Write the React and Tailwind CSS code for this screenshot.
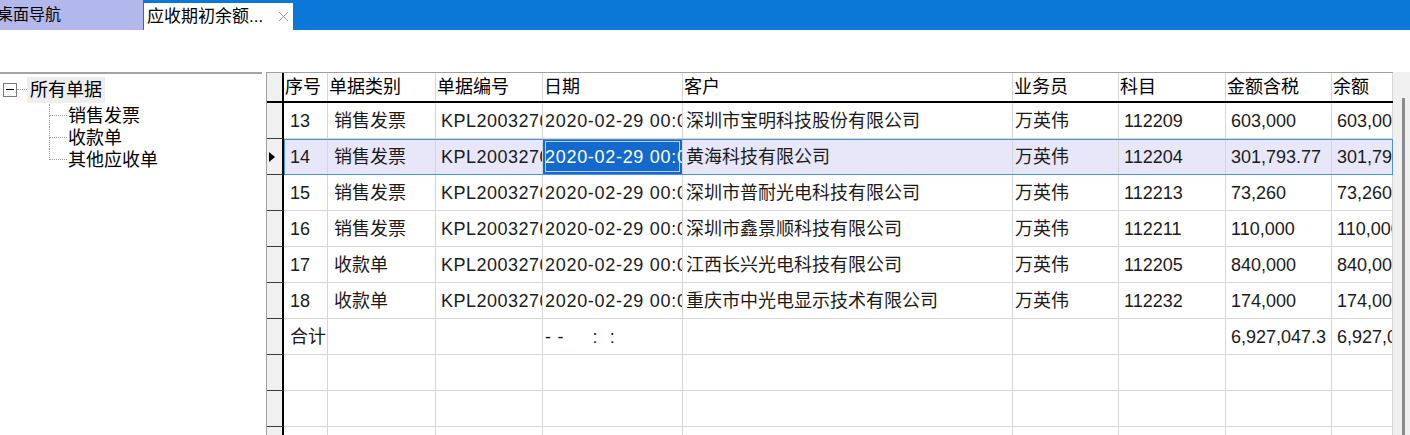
import React from 'react';
import { X } from 'lucide-react';

const columns = [
  { key: 'no', title: '序号', w: 'w-[44px]', pad: 'pl-[6px]' },
  { key: 'type', title: '单据类别', w: 'w-[108px]', pad: 'pl-[6px]' },
  { key: 'code', title: '单据编号', w: 'w-[107px]', pad: 'pl-[5px] tracking-[0.5px]' },
  { key: 'date', title: '日期', w: 'w-[140px]', pad: 'pl-[2px] tracking-[0.7px]' },
  { key: 'customer', title: '客户', w: 'w-[330px]', pad: 'pl-[3px]' },
  { key: 'staff', title: '业务员', w: 'w-[106px]', pad: 'pl-[2px]' },
  { key: 'subject', title: '科目', w: 'w-[107px]', pad: 'pl-[5px]' },
  { key: 'amount', title: '金额含税', w: 'w-[106px]', pad: 'pl-[5px]' },
  { key: 'balance', title: '余额', w: 'w-[61px]', pad: 'pl-[5px]' },
];

const rows = [
  { no: '13', type: '销售发票', code: 'KPL2003270001', date: '2020-02-29 00:00:00', customer: '深圳市宝明科技股份有限公司', staff: '万英伟', subject: '112209', amount: '603,000', balance: '603,000' },
  { no: '14', type: '销售发票', code: 'KPL2003270002', date: '2020-02-29 00:00:00', customer: '黄海科技有限公司', staff: '万英伟', subject: '112204', amount: '301,793.77', balance: '301,793.77', selected: true },
  { no: '15', type: '销售发票', code: 'KPL2003270003', date: '2020-02-29 00:00:00', customer: '深圳市普耐光电科技有限公司', staff: '万英伟', subject: '112213', amount: '73,260', balance: '73,260' },
  { no: '16', type: '销售发票', code: 'KPL2003270004', date: '2020-02-29 00:00:00', customer: '深圳市鑫景顺科技有限公司', staff: '万英伟', subject: '112211', amount: '110,000', balance: '110,000' },
  { no: '17', type: '收款单', code: 'KPL2003270005', date: '2020-02-29 00:00:00', customer: '江西长兴光电科技有限公司', staff: '万英伟', subject: '112205', amount: '840,000', balance: '840,000' },
  { no: '18', type: '收款单', code: 'KPL2003270006', date: '2020-02-29 00:00:00', customer: '重庆市中光电显示技术有限公司', staff: '万英伟', subject: '112232', amount: '174,000', balance: '174,000' },
  { no: '合计', type: '', code: '', date: '- -     :  :', customer: '', staff: '', subject: '', amount: '6,927,047.3', balance: '6,927,047.35' },
  {},
  {},
  {},
];

const treeChildren = ['销售发票', '收款单', '其他应收单'];

function TreeChild({ label, last }) {
  return (
    <div className="flex h-[22px] items-stretch">
      <div className="flex w-[18px] flex-col">
        <div className="h-1/2 border-b border-l border-dotted border-[#9a9a9a]"></div>
        <div className={`h-1/2 ${last ? '' : 'border-l border-dotted border-[#9a9a9a]'}`}></div>
      </div>
      <span className="ml-[1px] self-center leading-none">{label}</span>
    </div>
  );
}

function RowHeader({ selected, header }) {
  return (
    <div className={`flex w-[17px] shrink-0 items-center border-r-2 border-r-black bg-[#f0f0f0] ${header ? '' : 'border-b border-b-[#3a3a3a]'}`}>
      {selected && (
        <svg width="6" height="10" viewBox="0 0 6 10" className="ml-[2px]">
          <path d="M0 0 L6 5 L0 10 Z" fill="#000" />
        </svg>
      )}
    </div>
  );
}

export default function App() {
  return (
    <div className="h-[435px] w-[1410px] overflow-hidden bg-white font-['Liberation_Sans','Noto_Sans_CJK_SC',sans-serif] text-[18px] text-[#1b1b1b]">
      {/* tab bar */}
      <div className="flex h-[30px] items-end bg-[#0a78d7]">
        <div className="flex h-[30px] w-[143px] items-center overflow-hidden bg-[#b3b8ec] text-[16px] text-black">
          <span className="ml-[-3px] leading-none">桌面导航</span>
        </div>
        <div className="ml-[1px] flex h-[27px] w-[149px] items-center bg-white text-[17px] text-black">
          <span className="ml-[3px] leading-none">应收期初余额...</span>
          <X size={17} strokeWidth={1.2} className="ml-[12px] text-[#8a8a8a]" />
        </div>
      </div>

      <div className="h-[42px]"></div>

      <div className="flex h-[363px]">
        {/* left tree */}
        <div className="w-[262px] shrink-0 border-t-2 border-[#a3a3a3] pt-[3px] text-black">
          <div className="flex h-[25px] items-center">
            <div className="ml-[3px] flex h-[14px] w-[14px] items-center justify-center border border-[#7a7a7a]">
              <div className="h-[1px] w-[8px] bg-black"></div>
            </div>
            <div className="w-[10px] border-t border-dotted border-[#9a9a9a]"></div>
            <span className="bg-[#eeeeee] px-[3px] py-[4px] leading-none">所有单据</span>
          </div>
          <div className="ml-[49px]">
            <div className="h-[3px] border-l border-dotted border-[#9a9a9a]"></div>
            {treeChildren.map((c, i) => (
              <TreeChild key={c} label={c} last={i === treeChildren.length - 1} />
            ))}
          </div>
        </div>

        {/* grid */}
        <div className="ml-[4px] flex flex-1">
          <div className="w-[1127px] shrink-0 border-l border-t border-[#a0a0a0]">
            <div className="flex h-[30px] border-b-2 border-b-black">
              <RowHeader header />
              {columns.map((col) => (
                <div
                  key={col.key}
                  className={`${col.w} flex shrink-0 items-center overflow-hidden whitespace-nowrap border-r border-[#d6d6d6] pl-[1px] leading-none text-black`}
                >
                  {col.title}
                </div>
              ))}
            </div>
            {rows.map((row, ri) => (
              <div key={ri} className="flex h-[36px]">
                <RowHeader selected={row.selected} />
                <div
                  className={`flex ${row.selected ? 'bg-[#e7e7f9] outline outline-1 -outline-offset-1 outline-[#4a92e4]' : ''}`}
                >
                  {columns.map((col) => {
                    const active = row.selected && col.key === 'date';
                    return (
                      <div
                        key={col.key}
                        className={`${col.w} ${col.pad} flex shrink-0 items-center overflow-hidden whitespace-pre border-b border-r border-[#d6d6d6] leading-none ${
                          active
                            ? 'bg-[#1469cd] text-white shadow-[inset_0_0_0_2px_#1469cd,inset_0_0_0_3px_#b7d1f2]'
                            : ''
                        }`}
                      >
                        {row[col.key] || ''}
                      </div>
                    );
                  })}
                </div>
              </div>
            ))}
          </div>
          {/* scrollbar */}
          <div className="w-[17px] shrink-0 bg-[#f0f0f0] pl-[9px] pt-[26px]">
            <div className="h-full w-[3px] bg-[#8c8c8c]"></div>
          </div>
        </div>
      </div>
    </div>
  );
}
